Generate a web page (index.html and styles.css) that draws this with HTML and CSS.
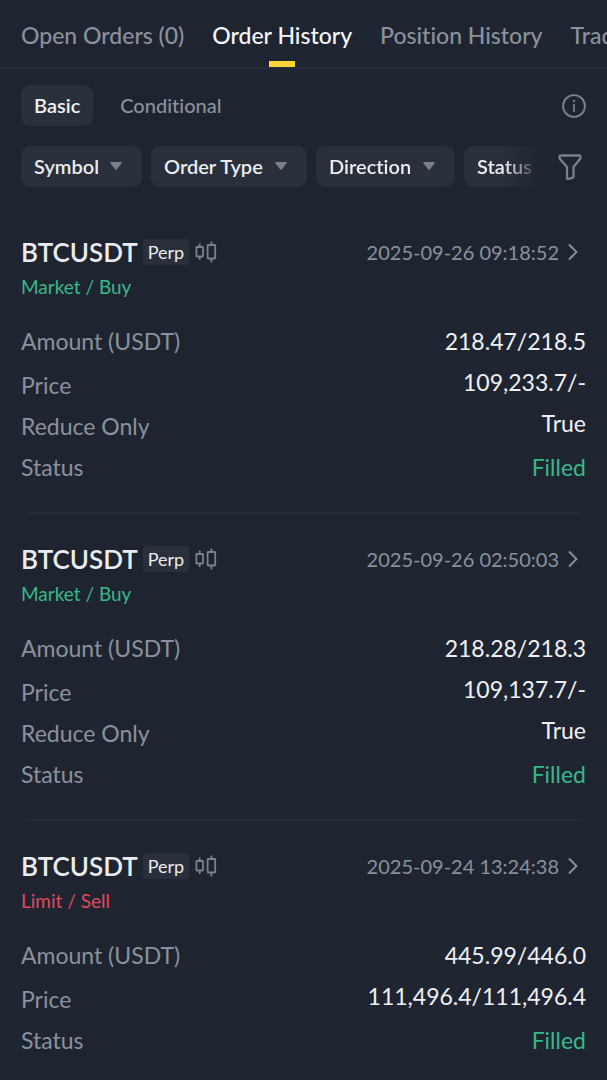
FILE: index.html
```html
<!DOCTYPE html>
<html lang="en">
<head>
    <meta charset="UTF-8">
    <meta name="viewport" content="width=device-width, initial-scale=1.0">
    <title>Order History</title>
    <link rel="stylesheet" href="styles.css">
</head>
<body>
    <!-- Shared icons -->
    <svg class="sprite" aria-hidden="true">
        <symbol id="caret" viewBox="0 0 12 8">
            <path d="M1 0h10a.8.8 0 0 1 .6 1.300L6.700 7.500a.9.9 0 0 1-1.400 0L.4 1.300A.8.8 0 0 1 1 0z" fill="currentColor"/>
        </symbol>
        <symbol id="candles" viewBox="0 0 22 24">
            <g fill="none" stroke="currentColor" stroke-width="1.800">
                <rect x="1.400" y="7" width="6.600" height="9.500" rx=".5"/>
                <path d="M4.700 3.500V7M4.700 16.500V20"/>
                <rect x="12.600" y="5" width="7.600" height="13.500" rx=".5"/>
                <path d="M16.400 1.500V5M16.400 18.500V22.500"/>
            </g>
        </symbol>
        <symbol id="chevron" viewBox="0 0 10 18">
            <path d="M1 1.500l7.500 7.500L1 16.500" fill="none" stroke="currentColor" stroke-width="1.900"/>
        </symbol>
    </svg>

    <nav class="tabs">
        <a href="#open-orders">Open Orders (0)</a>
        <a href="#order-history" class="active">Order History</a>
        <a href="#position-history">Position History</a>
        <a href="#trade-history">Trade History</a>
    </nav>

    <div class="toolbar">
        <button class="pill active" type="button">Basic</button>
        <button class="pill" type="button">Conditional</button>
        <button class="icon-btn info" type="button" aria-label="Info">
            <svg width="24" height="24" viewBox="0 0 24 24" fill="none" stroke="currentColor">
                <circle cx="12" cy="12" r="10.900" stroke-width="1.900"/>
                <path d="M12 10v8" stroke-width="1.700"/>
                <circle cx="12" cy="7" r="1.200" fill="currentColor" stroke="none"/>
            </svg>
        </button>
    </div>

    <div class="filters">
        <div class="filter-scroll">
            <div class="filter">
                <select aria-label="Symbol"><option>Symbol</option></select>
                <svg><use href="#caret"/></svg>
            </div>
            <div class="filter">
                <select aria-label="Order Type"><option>Order Type</option></select>
                <svg><use href="#caret"/></svg>
            </div>
            <div class="filter">
                <select aria-label="Direction"><option>Direction</option></select>
                <svg><use href="#caret"/></svg>
            </div>
            <div class="filter">
                <select aria-label="Status"><option>Status</option></select>
                <svg><use href="#caret"/></svg>
            </div>
        </div>
        <button class="icon-btn funnel" type="button" aria-label="Filter">
            <svg width="24" height="26" viewBox="0 0 24 26" fill="none" stroke="currentColor" stroke-width="2.300" stroke-linejoin="round">
                <path d="M2.500 1.500h19a1 1 0 0 1 1 1v1.300a2 2 0 0 1-.5 1.300L15.500 13v9.600a1 1 0 0 1-.7 1L10 25a.8.8 0 0 1-1-.8V13L2 5.100a2 2 0 0 1-.5-1.300V2.500a1 1 0 0 1 1-1z"/>
            </svg>
        </button>
    </div>

    <main class="orders">
        <article class="order">
            <div class="order-head">
                <h2>BTCUSDT</h2>
                <span class="tag">Perp</span>
                <svg class="candles"><use href="#candles"/></svg>
                <a class="time" href="#order-1">2025-09-26 09:18:52 <svg><use href="#chevron"/></svg></a>
            </div>
            <p class="side buy">Market / Buy</p>
            <dl>
                <div><dt>Amount (USDT)</dt><dd>218.47/218.5</dd></div>
                <div><dt>Price</dt><dd>109,233.7/-</dd></div>
                <div><dt>Reduce Only</dt><dd>True</dd></div>
                <div><dt>Status</dt><dd class="filled">Filled</dd></div>
            </dl>
        </article>

        <article class="order">
            <div class="order-head">
                <h2>BTCUSDT</h2>
                <span class="tag">Perp</span>
                <svg class="candles"><use href="#candles"/></svg>
                <a class="time" href="#order-2">2025-09-26 02:50:03 <svg><use href="#chevron"/></svg></a>
            </div>
            <p class="side buy">Market / Buy</p>
            <dl>
                <div><dt>Amount (USDT)</dt><dd>218.28/218.3</dd></div>
                <div><dt>Price</dt><dd>109,137.7/-</dd></div>
                <div><dt>Reduce Only</dt><dd>True</dd></div>
                <div><dt>Status</dt><dd class="filled">Filled</dd></div>
            </dl>
        </article>

        <article class="order">
            <div class="order-head">
                <h2>BTCUSDT</h2>
                <span class="tag">Perp</span>
                <svg class="candles"><use href="#candles"/></svg>
                <a class="time" href="#order-3">2025-09-24 13:24:38 <svg><use href="#chevron"/></svg></a>
            </div>
            <p class="side sell">Limit / Sell</p>
            <dl>
                <div><dt>Amount (USDT)</dt><dd>445.99/446.0</dd></div>
                <div><dt>Price</dt><dd>111,496.4/111,496.4</dd></div>
                <div><dt>Status</dt><dd class="filled">Filled</dd></div>
            </dl>
        </article>
    </main>
</body>
</html>
```

FILE: styles.css
```css
* {
    box-sizing: border-box;
}
body {
    font-family: Lato, "Liberation Sans", sans-serif;
    font-variant-ligatures: none;
    background-color: #1f2530;
    color: #eaecef;
    margin: 0;
}
a {
    text-decoration: none;
    color: inherit;
}
button, select {
    font: inherit;
    font-variant-ligatures: none;
    color: inherit;
    border: none;
    background: none;
    padding: 0;
    cursor: pointer;
}
.sprite {
    position: absolute;
    width: 0;
    height: 0;
}

/* Top tabs */
.tabs {
    display: flex;
    gap: 28px;
    padding: 0 21px;
    border-bottom: 2px solid #272d38;
    overflow: hidden;
    white-space: nowrap;
    font-size: 23px;
    font-weight: 500;
    line-height: 67px;
    color: #8b919d;
}
.tabs a {
    position: relative;
    height: 67px;
    padding-top: 2px;
}
.tabs .active {
    color: #f7f8fa;
}
.tabs .active::after {
    content: "";
    position: absolute;
    left: 50%;
    bottom: 0;
    width: 26px;
    height: 6px;
    margin-left: -13px;
    background: #fcd535;
}

/* Basic / Conditional */
.toolbar {
    display: flex;
    align-items: center;
    gap: 14px;
    padding: 16px 21px 0;
}
.pill {
    height: 41px;
    padding: 0 13px 2px;
    border-radius: 9px;
    font-size: 20px;
    font-weight: 500;
    color: #8b919d;
}
.pill.active {
    background: #2a303b;
    color: #f0f1f4;
    font-weight: 600;
}
.icon-btn {
    display: flex;
    color: #79818f;
}
.info {
    margin-left: auto;
}

/* Filters */
.filters {
    display: flex;
    align-items: center;
    gap: 16px;
    padding: 20px 25px 0 21px;
}
.filter-scroll {
    display: flex;
    flex: 1;
    gap: 9px;
    min-width: 0;
    overflow: hidden;
    -webkit-mask-image: linear-gradient(to right, #000 calc(100% - 38px), transparent calc(100% - 2px));
    mask-image: linear-gradient(to right, #000 calc(100% - 38px), transparent calc(100% - 2px));
}
.filter {
    position: relative;
    flex: none;
}
.filter select {
    appearance: none;
    height: 41px;
    padding: 0 43px 2px 13px;
    border-radius: 9px;
    background: #2a303b;
    font-size: 20px;
    font-weight: 600;
}
.filter svg {
    position: absolute;
    right: 20px;
    top: 16px;
    width: 12px;
    height: 8px;
    color: #79818f;
    pointer-events: none;
}

/* Orders */
.orders {
    padding: 0 21px;
}
.order {
    padding-top: 45px;
}
.order + .order {
    padding-top: 25px;
}
.order:not(:last-child)::after {
    content: "";
    display: block;
    height: 2px;
    margin: 27px 6px 0;
    background: #262c37;
}
.order-head {
    display: flex;
    align-items: center;
    height: 40px;
}
.order-head h2 {
    margin: 0 5px 0 0;
    font-size: 26px;
    font-weight: 600;
}
.tag {
    padding: 0 5px;
    border-radius: 4px;
    background: #2a303b;
    font-size: 18px;
    line-height: 26px;
}
.candles {
    width: 22px;
    height: 24px;
    margin-left: 6px;
    color: #79818f;
}
.time {
    display: flex;
    align-items: center;
    gap: 9px;
    margin-left: auto;
    padding-right: 8px;
    font-size: 20px;
    color: #8b919d;
}
.time svg {
    width: 10px;
    height: 18px;
}
.side {
    margin: 0;
    font-size: 19px;
    line-height: 30px;
}
.buy, dl .filled {
    color: #36b988;
}
.sell {
    color: #e0485c;
}
dl {
    margin: 19px 0 0;
    font-size: 23px;
    line-height: 41px;
}
dl div {
    display: flex;
    justify-content: space-between;
}
dt {
    color: #8b919d;
}
dd {
    margin: 0;
    color: #f0f1f4;
}
dl div + div dt,
dl div:last-child dd {
    padding-top: 6px;
    line-height: 35px;
}
```
